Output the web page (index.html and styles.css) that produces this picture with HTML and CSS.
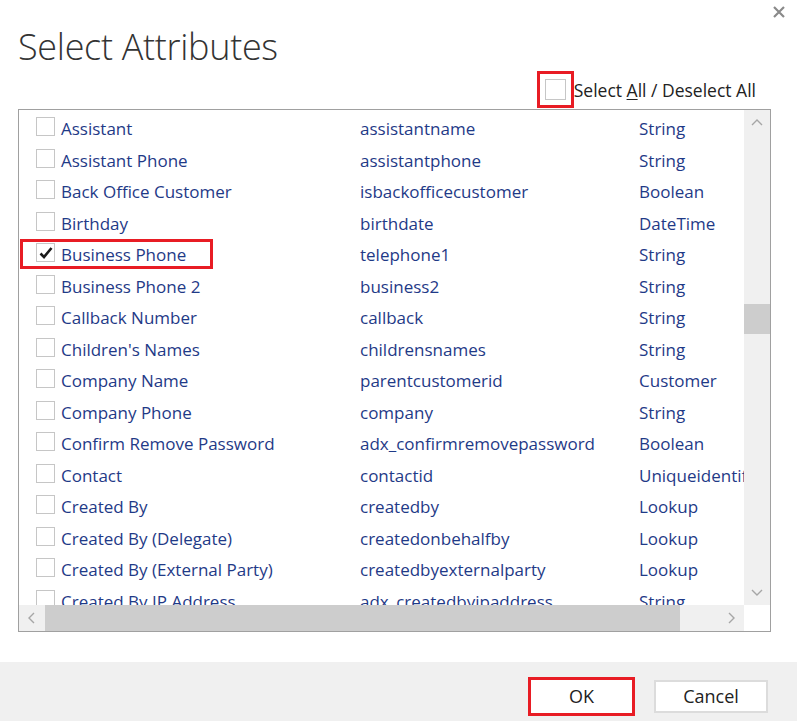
FILE: index.html
```html
<!DOCTYPE html>
<html>
<head>
<meta charset="utf-8">
<link rel="stylesheet" href="styles.css">
</head>
<body>
<div class="dialog">
  <button class="close" aria-label="Close">
    <svg width="12" height="12" viewBox="0 0 12 12"><path d="M1 1L11 11M11 1L1 11" stroke="#8a8a8a" stroke-width="2.2" fill="none"/></svg>
  </button>
  <h1 class="title">Select Attributes</h1>
  <div class="selectall">
    <span class="hl-sa"><span class="cb"></span></span>
    <span class="sa-label">Select <u>A</u>ll / Deselect All</span>
  </div>
  <div class="listbox">
    <div class="viewport">
      <div class="rows">
        <div class="row"><span class="cb"></span><span class="c1">Assistant</span><span class="c2">assistantname</span><span class="c3">String</span></div>
        <div class="row"><span class="cb"></span><span class="c1">Assistant Phone</span><span class="c2">assistantphone</span><span class="c3">String</span></div>
        <div class="row"><span class="cb"></span><span class="c1">Back Office Customer</span><span class="c2">isbackofficecustomer</span><span class="c3">Boolean</span></div>
        <div class="row"><span class="cb"></span><span class="c1">Birthday</span><span class="c2">birthdate</span><span class="c3">DateTime</span></div>
        <div class="row sel"><span class="hl-row"></span><span class="cb checked"><svg width="16" height="16" viewBox="0 0 16 16"><path d="M2.5 8.5L6 12L13.5 3" stroke="#1a1a1a" stroke-width="2.6" fill="none"/></svg></span><span class="c1">Business Phone</span><span class="c2">telephone1</span><span class="c3">String</span></div>
        <div class="row"><span class="cb"></span><span class="c1">Business Phone 2</span><span class="c2">business2</span><span class="c3">String</span></div>
        <div class="row"><span class="cb"></span><span class="c1">Callback Number</span><span class="c2">callback</span><span class="c3">String</span></div>
        <div class="row"><span class="cb"></span><span class="c1">Children's Names</span><span class="c2">childrensnames</span><span class="c3">String</span></div>
        <div class="row"><span class="cb"></span><span class="c1">Company Name</span><span class="c2">parentcustomerid</span><span class="c3">Customer</span></div>
        <div class="row"><span class="cb"></span><span class="c1">Company Phone</span><span class="c2">company</span><span class="c3">String</span></div>
        <div class="row"><span class="cb"></span><span class="c1">Confirm Remove Password</span><span class="c2">adx_confirmremovepassword</span><span class="c3">Boolean</span></div>
        <div class="row"><span class="cb"></span><span class="c1">Contact</span><span class="c2">contactid</span><span class="c3">Uniqueidentifier</span></div>
        <div class="row"><span class="cb"></span><span class="c1">Created By</span><span class="c2">createdby</span><span class="c3">Lookup</span></div>
        <div class="row"><span class="cb"></span><span class="c1">Created By (Delegate)</span><span class="c2">createdonbehalfby</span><span class="c3">Lookup</span></div>
        <div class="row"><span class="cb"></span><span class="c1">Created By (External Party)</span><span class="c2">createdbyexternalparty</span><span class="c3">Lookup</span></div>
        <div class="row"><span class="cb"></span><span class="c1">Created By IP Address</span><span class="c2">adx_createdbyipaddress</span><span class="c3">String</span></div>
      </div>
    </div>
    <div class="vscroll">
      <span class="arrow"><svg width="14" height="10" viewBox="0 0 14 10"><path d="M2 7L7 2L12 7" stroke="#a6a6a6" stroke-width="1.4" fill="none"/></svg></span>
      <span class="vtrack"><span class="vthumb"></span></span>
      <span class="arrow"><svg width="14" height="10" viewBox="0 0 14 10"><path d="M2 3L7 8L12 3" stroke="#a6a6a6" stroke-width="1.4" fill="none"/></svg></span>
    </div>
    <div class="hscroll">
      <span class="harrow"><svg width="10" height="14" viewBox="0 0 10 14"><path d="M7 2L2 7L7 12" stroke="#a6a6a6" stroke-width="1.4" fill="none"/></svg></span>
      <span class="hthumb"></span>
      <span class="htrack-end"><svg width="10" height="14" viewBox="0 0 10 14"><path d="M3 2L8 7L3 12" stroke="#a6a6a6" stroke-width="1.4" fill="none"/></svg></span>
    </div>
    <div class="corner"></div>
  </div>
  <div class="footer">
    <span class="hl-ok"><button class="btn">OK</button></span>
    <button class="btn cancel">Cancel</button>
  </div>
</div>
</body>
</html>
```
FILE: styles.css
```css
* { box-sizing: border-box; }
html, body { margin: 0; padding: 0; background: #fff; }
body { width: 797px; height: 721px; overflow: hidden; font-family: "Open Sans", "Noto Sans", sans-serif; }

.dialog { position: relative; width: 797px; height: 721px; display: flex; flex-direction: column; }

.close { position: absolute; top: 6px; right: 12px; width: 12px; height: 12px; padding: 0; border: 0; background: none; display: flex; }

.title { margin: 0; padding: 23px 0 0 18px; height: 70px; font-weight: 300; font-size: 36px; line-height: 48px; color: #333; letter-spacing: -0.3px; }

.selectall { height: 39px; display: flex; justify-content: flex-end; align-items: center; padding-right: 41px; }
.hl-sa { width: 37px; height: 37px; border: 3px solid #e81c24; display: flex; align-items: center; justify-content: center; }
.hl-sa .cb { width: 21px; height: 21px; }
.sa-label { font-size: 17.5px; color: #222; padding-left: 0; }
.sa-label u { text-decoration-thickness: 1px; text-underline-offset: 2px; }

.listbox { margin: 0 26px 0 18px; height: 523px; border: 1px solid #a0a0a0; display: grid; grid-template-columns: 1fr 26px; grid-template-rows: 1fr 26px; }

.viewport { overflow: hidden; }
.rows { padding-top: 3px; }
.row { position: relative; height: 31.5px; display: flex; align-items: center; padding-left: 17px; font-size: 17px; color: #1f3a87; white-space: nowrap; }
.cb { flex: none; width: 19px; height: 19px; border: 1px solid #c6c6c6; background: #fff; display: flex; align-items: center; justify-content: center; margin-top: -4px; }
.hl-sa .cb { margin-top: 0; }
.c1 { width: 305px; padding-left: 6px; flex: none; }
.c2 { width: 279px; flex: none; }
.c3 { flex: none; }
.hl-row { position: absolute; left: 1px; top: 0; width: 193px; height: 30px; border: 3px solid #e81c24; }

.vscroll { background: #f0f0f0; display: flex; flex-direction: column; }
.arrow { height: 26px; display: flex; align-items: center; justify-content: center; }
.vtrack { flex: 1; position: relative; padding-top: 168px; display: flex; flex-direction: column; }
.vthumb { height: 30px; background: #cdcdcd; }

.hscroll { background: #f0f0f0; display: flex; }
.harrow { width: 26px; display: flex; align-items: center; justify-content: center; }
.hthumb { width: 635px; background: #cdcdcd; }
.htrack-end { flex: 1; display: flex; align-items: center; justify-content: flex-end; padding-right: 8px; }
.corner { background: #fff; }

.footer { margin-top: 30px; height: 59px; background: #f0f0f0; display: flex; align-items: center; justify-content: flex-end; padding-right: 29px; padding-top: 9px; }
.hl-ok { width: 107px; height: 39px; border: 3px solid #e81c24; display: flex; margin-right: 19px; }
.btn { font-family: "Open Sans", "Noto Sans", sans-serif; font-size: 18px; color: #222; background: #fff; border: 1px solid #dcdcdc; cursor: pointer; }
.hl-ok .btn { flex: 1; border: 0; }
.cancel { width: 114px; height: 33px; border: 2px solid #dcdcdc; }
```
